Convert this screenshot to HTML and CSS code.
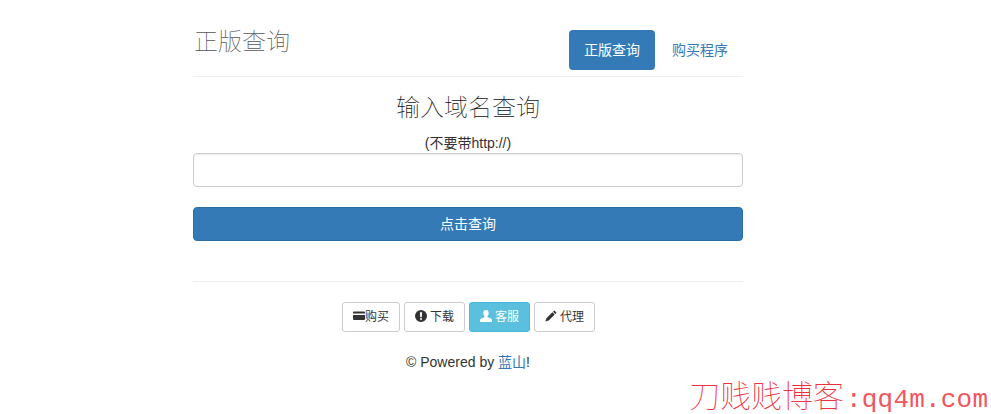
FILE: index.html
```html
<!DOCTYPE html>
<html lang="zh-CN">
<head>
  <meta charset="UTF-8">
  <meta name="viewport" content="width=device-width, initial-scale=1.0">
  <title>正版查询</title>
  <link rel="stylesheet" href="styles.css">
</head>
<body>
  <div class="container">
    <div class="header">
      <h3 class="brand">正版查询</h3>
      <ul class="pills">
        <li><a class="pill active" href="#">正版查询</a></li>
        <li><a class="pill" href="#">购买程序</a></li>
      </ul>
    </div>

    <form class="query-form">
      <h3 class="form-title">输入域名查询</h3>
      <label class="form-label" for="domain">(不要带http://)</label>
      <input class="form-input" id="domain" type="text">
      <button class="submit-btn" type="button">点击查询</button>
    </form>

    <hr class="divider">

    <div class="links">
      <a class="btn" href="#"><svg class="icon" viewBox="0 0 12 12"><path d="M1 1.500h10a1 1 0 0 1 1 1v1H0v-1a1 1 0 0 1 1-1zM0 5h12v4a1 1 0 0 1-1 1H1a1 1 0 0 1-1-1z"/></svg>购买</a>
      <a class="btn" href="#"><svg class="icon" viewBox="0 0 12 12"><path fill-rule="evenodd" d="M6 0a6 6 0 1 1 0 12A6 6 0 0 1 6 0zM4.900 2.300l.3 4.900h1.600l.3-4.900zM5 8.200v1.600h2V8.200z"/></svg> 下载</a>
      <a class="btn btn-info" href="#"><svg class="icon" viewBox="0 0 12 12"><path d="M6 0c1.700 0 2.700 1.200 2.700 3 0 1.300-.5 2.500-1.200 3.200v1.100c1.800.6 4.500 1.300 4.500 2.700v2H0v-2c0-1.400 2.700-2.100 4.500-2.700V6.200C3.800 5.500 3.300 4.300 3.300 3 3.300 1.200 4.300 0 6 0z"/></svg> 客服</a>
      <a class="btn" href="#"><svg class="icon" viewBox="0 0 12 12"><path d="M9.300.4l2.300 2.300-1.300 1.300L8 1.700zM7.400 2.300l2.300 2.300-6 6L.4 11.600l1-3.300z"/></svg> 代理</a>
    </div>

    <p class="footer">© Powered by <a href="#">蓝山</a>!</p>
  </div>

  <div class="watermark">刀贱贱博客<span class="watermark-latin">:qq4m.com</span></div>
</body>
</html>
```

FILE: styles.css
```css
body, html {
  margin: 0;
  padding: 0;
}
body {
  position: relative;
  height: 414px;
  overflow: hidden;
  background: #fff;
  color: #333;
  font-family: "Liberation Sans", "Noto Sans CJK SC", sans-serif;
  font-size: 14px;
  line-height: 20px;
}
a {
  color: #337ab7;
  text-decoration: none;
}
.container {
  width: 550px;
  margin-left: 193px;
  padding-top: 30px;
}
.header {
  display: flex;
  justify-content: space-between;
  align-items: flex-start;
  height: 46px;
  border-bottom: 1px solid #eee;
}
.brand {
  margin: 0 0 0 1px;
  color: #555;
  font-size: 24px;
  font-weight: 100;
  line-height: 24px;
}
.pills {
  display: flex;
  gap: 2px;
  margin: 0;
  padding: 0;
  list-style: none;
}
.pill {
  display: block;
  padding: 10px 15px;
  border-radius: 4px;
}
.pill.active {
  background: #337ab7;
  color: #fff;
}
.query-form {
  display: flex;
  flex-direction: column;
  padding-top: 18px;
}
.form-title {
  margin: 0 0 13px;
  color: #111;
  font-size: 24px;
  font-weight: 100;
  line-height: 26px;
  text-align: center;
}
.form-label {
  height: 19px;
  margin-top: -1px;
  margin-bottom: 1px;
  text-align: center;
}
.form-input {
  box-sizing: border-box;
  width: 100%;
  height: 34px;
  padding: 6px 12px;
  border: 1px solid #ccc;
  border-radius: 4px;
  box-shadow: inset 0 1px 1px rgba(0, 0, 0, .075);
  font-size: 14px;
}
.submit-btn {
  height: 34px;
  margin-top: 20px;
  padding: 0 0 2px;
  border: 1px solid #2e6da4;
  border-radius: 4px;
  background: #337ab7;
  color: #fff;
  font-family: inherit;
  font-size: 14px;
}
.divider {
  margin: 40px 0 20px;
  border: 0;
  border-top: 1px solid #eee;
}
.links {
  display: flex;
  justify-content: center;
  gap: 4px;
  padding-left: 1px;
}
.btn {
  box-sizing: border-box;
  display: block;
  height: 30px;
  padding: 4px 10px;
  border: 1px solid #ccc;
  border-radius: 3px;
  color: #333;
  font-size: 12px;
  word-spacing: -.33px;
  white-space: nowrap;
}
.btn-info {
  border-color: #46b8da;
  background: #5bc0de;
  color: #fff;
}
.icon {
  width: 12px;
  height: 12px;
  vertical-align: -1px;
  fill: currentColor;
}
.footer {
  margin: 20px 0 0;
  text-align: center;
}
.watermark {
  position: absolute;
  top: 381px;
  left: 689px;
  color: #f0303c;
  font-size: 31px;
  font-weight: 100;
  line-height: 32px;
  white-space: nowrap;
}
.watermark-latin {
  margin-left: 2px;
  color: #f25560;
  font-family: "Liberation Mono", monospace;
  font-size: 26px;
  line-height: 26px;
  letter-spacing: .2px;
}
```
